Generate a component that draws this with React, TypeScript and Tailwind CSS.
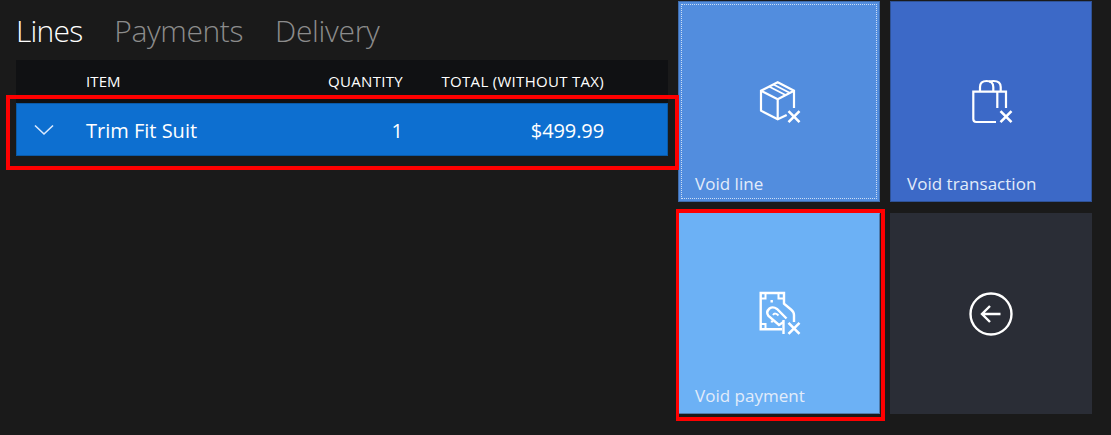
import React from 'react';

const font = { fontFamily: '"Open Sans", "Noto Sans", sans-serif' };

const CrossMark: React.FC<{ x: number; y: number }> = ({ x, y }) => (
  <path d={`M${x - 5.5} ${y - 5.5}L${x + 5.5} ${y + 5.5}M${x + 5.5} ${y - 5.5}L${x - 5.5} ${y + 5.5}`} strokeWidth={2.6} />
);

const BoxIcon = () => (
  <svg width="49" height="49" viewBox="0 0 49 49" fill="none" stroke="white" strokeWidth="2.2">
    <path d="M31.7 38 22.7 42.3 6 33.7V13.7L22.7 5.3 39 13.7V31" />
    <path d="M6 13.7 22.7 22.3 39 13.7M22.7 22.3V42.3" />
    <path d="M14 9.5 30.5 18M18.5 7.5 35 16" strokeWidth="1.8" />
    <CrossMark x={39} y={39.7} />
  </svg>
);

const BagIcon = () => (
  <svg width="49" height="49" viewBox="0 0 49 49" fill="none" stroke="white" strokeWidth="2.2">
    <path d="M29 45H9.3Q6.3 45 6.3 42V14.7H39V31M30.3 14.7V31" />
    <path d="M13 14.7V10Q13 4 19.6 4T26.3 10V14.7" />
    <path d="M22 4.6Q24 4 26.5 4 33.7 4 33.7 10V14.7" />
    <CrossMark x={39} y={39.7} />
  </svg>
);

const PaymentIcon = () => (
  <svg width="49" height="49" viewBox="0 0 49 49" fill="none" stroke="white" strokeWidth="2.4">
    <path d="M27 40.3H5.7V4H29V14.6L36 20.5Q39 23 39 26V33" />
    <path d="M28.5 31V45" />
    <path d="M31.5 29.5 22 20Q18 17 14.5 19.5 10.5 23 13.5 27L24 36 28.5 33" />
    <path d="M18 26Q20 23 23.5 26.5" strokeWidth="2" />
    <path d="M5.7 9.5H10.5V4M23.5 4V9.5H29M5.7 35H10.5V40.3" strokeWidth="2" />
    <path d="M16.7 11V13.5M17 31.5V33.5" />
    <CrossMark x={39} y={39.3} />
  </svg>
);

const BackIcon = () => (
  <svg width="49" height="49" viewBox="0 0 49 49" fill="none" stroke="white" strokeWidth="2.4">
    <circle cx="24" cy="25" r="20.5" />
    <path d="M33.5 25H15M23 17 15 25 23 33" />
  </svg>
);

interface TileProps {
  label: string;
  className: string;
  children: React.ReactNode;
}

const Tile: React.FC<TileProps> = ({ label, className, children }) => (
  <div className={`flex h-[201px] w-[202px] flex-col border pt-[75px] pb-[6px] ${className}`}>
    <div className="ml-[76px]">{children}</div>
    <span className="mt-auto pl-[16px] text-[17px] leading-[22px] tracking-[0.02px] text-[#e2ecfa]">{label}</span>
  </div>
);

export default function App() {
  return (
    <div className="flex h-[435px] w-[1111px] overflow-hidden bg-[#1a1a1a] text-white" style={font}>
      <div className="w-[678px] shrink-0">
        <div className="flex h-[60px] gap-[32px] pl-[16px] pt-[10px] text-[30px] font-light leading-[42px]">
          <span className="tracking-[-0.8px] text-white">Lines</span>
          <span className="tracking-[-0.4px] text-[#8c8c8c]">Payments</span>
          <span className="tracking-[-0.3px] text-[#8c8c8c]">Delivery</span>
        </div>

        <div className="ml-4 w-[652px]">
          <div className="flex h-[43px] items-center bg-[#101113] text-[15px] font-medium">
            <span className="ml-[70px] flex-1 tracking-[0.1px]">ITEM</span>
            <span className="w-[120px] text-right tracking-[0.3px]">QUANTITY</span>
            <span className="mr-[64px] w-[201px] text-right tracking-[0.3px]">TOTAL (WITHOUT TAX)</span>
          </div>

          <div className="relative flex h-[53px] items-center border border-[#0a5aa8] bg-[#0d6fd0] text-[20px]">
            <svg className="ml-[17px]" width="20" height="12" viewBox="0 0 20 12" fill="none" stroke="#dbeafe" strokeWidth="1.6">
              <path d="M1 1.5 10 10 19 1.5" />
            </svg>
            <span className="ml-[32px] flex-1 pt-[3px]">Trim Fit Suit</span>
            <span className="w-[120px] pt-[3px] text-right">1</span>
            <span className="mr-[63px] w-[201px] pt-[3px] text-right tracking-[-0.1px]">$499.99</span>
            <div className="pointer-events-none absolute -top-[9px] -left-[11px] -right-[12px] -bottom-[15px] border-[4px] border-[#ff0000]" />
          </div>
        </div>
      </div>

      <div className="grid grid-cols-[202px_202px] grid-rows-[201px_201px] gap-x-[10px] gap-y-[11px] pt-[1px]">
        <Tile label="Void line" className="border-[#3f6cac] bg-[#528dde] outline-1 -outline-offset-[4px] outline-dotted outline-white/70">
          <BoxIcon />
        </Tile>
        <Tile label="Void transaction" className="border-[#2f5296] bg-[#3c69c7]">
          <BagIcon />
        </Tile>
        <div className="relative">
          <Tile label="Void payment" className="border-transparent border-r-[#4f7bab] border-b-[#4f7bab] bg-[#6cb1f5]">
            <PaymentIcon />
          </Tile>
          <div className="pointer-events-none absolute -top-[4px] -left-[2px] -right-[5px] -bottom-[7px] border-[4px] border-l-[3px] border-[#ff0000]" />
        </div>
        <Tile label="" className="border-[#2a2d36] bg-[#2a2d36]">
          <BackIcon />
        </Tile>
      </div>
    </div>
  );
}
